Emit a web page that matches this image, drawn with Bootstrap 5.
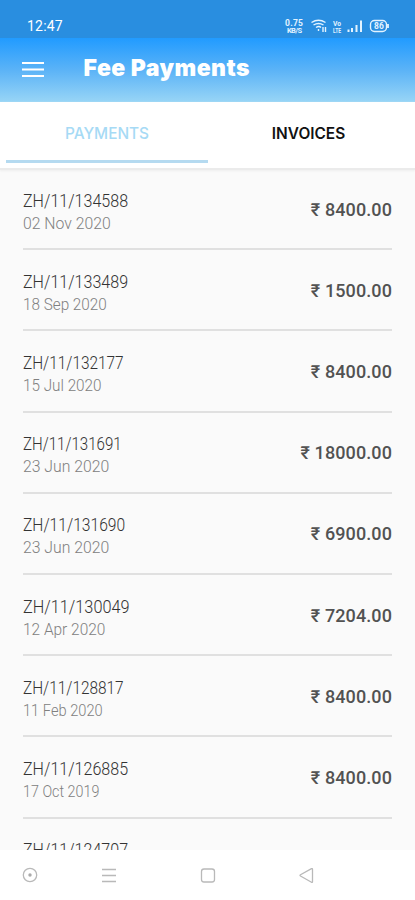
<!DOCTYPE html>
<html lang="en">
<head>
<meta charset="utf-8">
<meta name="viewport" content="width=device-width, initial-scale=1">
<title>Fee Payments</title>
<link href="https://cdn.jsdelivr.net/npm/bootstrap@5.3.0/dist/css/bootstrap.min.css" rel="stylesheet">
<style>
body{font-family:Roboto,"Noto Sans",sans-serif;background:#fafafa}
.screen{height:900px}
.status{height:38px;background:#298ee0;padding:14px 26px 0 27px}
.clock{font-size:14px;line-height:24px;letter-spacing:.2px}
.titlebar{height:64px;background:linear-gradient(#219bff,#5bb3f7 50%,#98d5f6);padding-left:22px}
.titlebar h1{font:900 23px/30px Inter,"Open Sans",sans-serif;margin:0 0 4px 38.5px;white-space:nowrap;letter-spacing:.45px}
.tabs{height:68px;border-bottom:2px solid #ebebeb;box-shadow:0 1px 2px #eee}
.tab-item{font:500 15.400px/24px Inter,sans-serif;color:#111;padding-top:20px}
.tab-item.current{color:#a6daf5;margin-left:6px;width:202px;height:61px;border-bottom:3px solid #b5daf0}
.tab-item.other{width:201px;font-weight:600}
.entries{padding:0 23px;height:680px}
.entry{height:81.2px;border-bottom:2px solid #e0e0e0;flex-shrink:0;padding-top:20px}
.entry:first-child{height:80.2px}
.entry:nth-child(n+2){padding-top:20.600px}
.ref{font-size:18px;line-height:22px;font-weight:300;color:#333}
.date{font-size:16px;line-height:24px;font-weight:300;color:#808080}
.ref span,.date span{display:inline-block;transform-origin:0 50%}
.ref span{transform:scaleX(.893)}
.entry:nth-child(3) .ref span,.entry:nth-child(7) .ref span{transform:scaleX(.855)}
.entry:nth-child(4) .ref span{transform:scaleX(.838)}
.entry:nth-child(5) .ref span{transform:scaleX(.868)}
.entry:nth-child(6) .ref span{transform:scaleX(.905)}
.date span{transform:scaleX(.985)}
.entry:nth-child(2) .date span,.entry:nth-child(3) .date span{transform:scaleX(.955)}
.entry:nth-child(6) .date span{transform:scaleX(.965)}
.entry:nth-child(7) .date span{transform:scaleX(.915)}
.entry:nth-child(8) .date span{transform:scaleX(.895)}
.amount{font-size:18px;font-weight:500;line-height:24px;color:#525252;padding-top:8px;letter-spacing:.1px}
.sysnav{height:50px;padding-left:22px}
</style>
</head>
<body>
<div class="screen d-flex flex-column overflow-hidden">
<header class="text-white">
 <div class="status d-flex justify-content-between">
  <span class="clock">12:47</span>
  <svg width="106" height="20" viewBox="283 14 106 20" fill="none" stroke="#e3f3ff" stroke-width="1.4">
   <g fill="#e3f3ff" stroke="none" font-family="Roboto, sans-serif" font-weight="700"><text x="285" y="25.500" font-size="8.5" textLength="18">0.75</text><text x="287" y="32.500" font-size="7.5" textLength="15">KB/S</text><text x="333" y="25.500" font-size="7.5" textLength="8" lengthAdjust="spacingAndGlyphs">Vo</text><text x="333" y="32.500" font-size="7.5" textLength="8" lengthAdjust="spacingAndGlyphs">LTE</text><text x="374" y="29.200" font-size="8.5" textLength="10">86</text></g>
   <path d="M311.500 22.500q7-4.500 14 0M313.500 25q5-3 10 0M316 27.500q3-2 5 0M318.500 29v2M323 27v5M325.500 27v5"/>
   <path d="M348.500 32v-2.500M352 32v-4M356.500 32v-7M361 32v-11.500" stroke-width="2"/>
   <rect x="370.500" y="20.500" width="16" height="11" rx="4"/><path d="M388 24v4" stroke-width="1.800"/>
  </svg>
 </div>
 <div class="titlebar d-flex align-items-center">
  <svg width="23" height="18" viewBox="0 0 23 18" stroke="#fff" stroke-width="2"><path d="M0 2h22M0 8.500h22M0 15h22"/></svg>
  <h1>Fee Payments</h1>
 </div>
</header>
<nav class="tabs d-flex bg-white flex-shrink-0">
 <div class="tab-item current text-center">PAYMENTS</div>
 <div class="tab-item other text-center">INVOICES</div>
</nav>
<main class="entries d-flex flex-column overflow-hidden">
 <div class="entry d-flex justify-content-between"><div><div class="ref"><span>ZH/11/134588</span></div><div class="date"><span>02 Nov 2020</span></div></div><div class="amount">₹ 8400.00</div></div>
 <div class="entry d-flex justify-content-between"><div><div class="ref"><span>ZH/11/133489</span></div><div class="date"><span>18 Sep 2020</span></div></div><div class="amount">₹ 1500.00</div></div>
 <div class="entry d-flex justify-content-between"><div><div class="ref"><span>ZH/11/132177</span></div><div class="date"><span>15 Jul 2020</span></div></div><div class="amount">₹ 8400.00</div></div>
 <div class="entry d-flex justify-content-between"><div><div class="ref"><span>ZH/11/131691</span></div><div class="date"><span>23 Jun 2020</span></div></div><div class="amount">₹ 18000.00</div></div>
 <div class="entry d-flex justify-content-between"><div><div class="ref"><span>ZH/11/131690</span></div><div class="date"><span>23 Jun 2020</span></div></div><div class="amount">₹ 6900.00</div></div>
 <div class="entry d-flex justify-content-between"><div><div class="ref"><span>ZH/11/130049</span></div><div class="date"><span>12 Apr 2020</span></div></div><div class="amount">₹ 7204.00</div></div>
 <div class="entry d-flex justify-content-between"><div><div class="ref"><span>ZH/11/128817</span></div><div class="date"><span>11 Feb 2020</span></div></div><div class="amount">₹ 8400.00</div></div>
 <div class="entry d-flex justify-content-between"><div><div class="ref"><span>ZH/11/126885</span></div><div class="date"><span>17 Oct 2019</span></div></div><div class="amount">₹ 8400.00</div></div>
 <div class="entry d-flex justify-content-between"><div><div class="ref"><span>ZH/11/124707</span></div></div></div>
</main>
<footer class="sysnav bg-white flex-shrink-0">
 <svg width="300" height="50" fill="none" stroke="#b9b9b9" stroke-width="1.300">
  <circle cx="8" cy="25" r="6.700"/><circle cx="8" cy="25" r="1.700" fill="#aaa" stroke="none"/>
  <path d="M80 19.500h14M80 25.500h14M80 31.500h14"/>
  <rect x="179.500" y="19" width="13" height="13" rx="2.500"/>
  <path d="M290.500 19.200v12.600q0 1-1 .5l-11-6.300q-1-.7 0-1.300l11-6q1-.5 1 .5z"/>
 </svg>
</footer>
</div>
<script src="https://cdn.jsdelivr.net/npm/bootstrap@5.3.0/dist/js/bootstrap.bundle.min.js"></script>
</body>
</html>
